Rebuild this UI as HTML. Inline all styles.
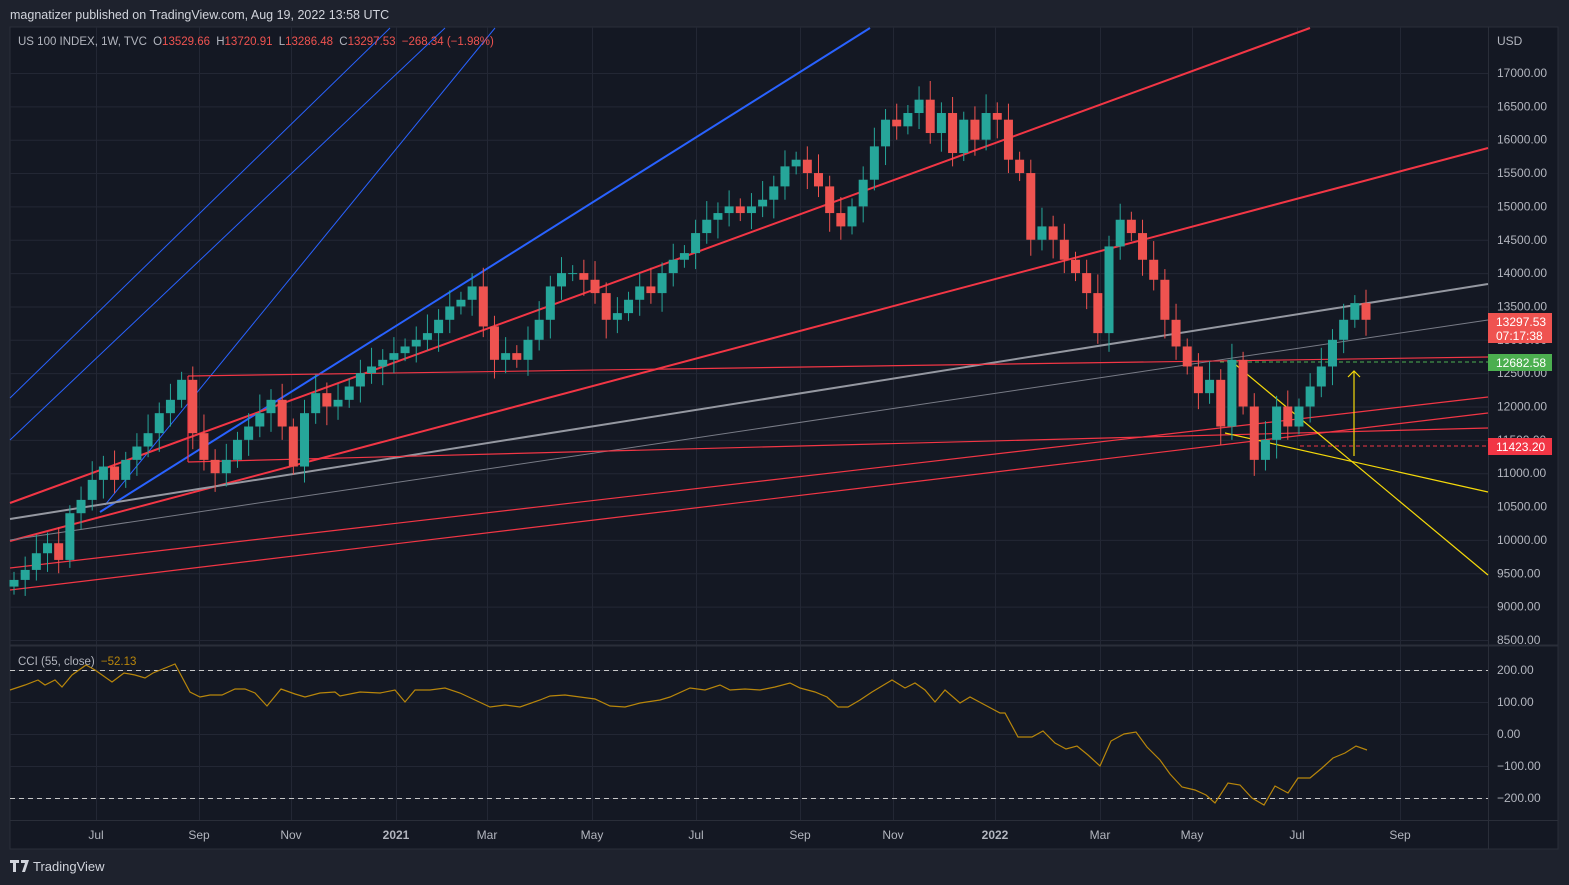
<!DOCTYPE html>
<html><head><meta charset="utf-8"><style>
html,body{margin:0;padding:0;background:#1e222d;width:1569px;height:885px;overflow:hidden;font-family:"Liberation Sans",sans-serif}
svg{position:absolute;left:0;top:0}
</style></head><body>
<svg id="s" width="1569" height="885" xmlns="http://www.w3.org/2000/svg" font-family="Liberation Sans, sans-serif">
<rect x="0" y="0" width="1569" height="885" fill="#1e222d"/>
<text x="10" y="19" fill="#d1d4dc" font-size="12.5">magnatizer published on TradingView.com, Aug 19, 2022 13:58 UTC</text>
<rect x="10" y="27" width="1548" height="822" fill="#141823" stroke="#2a2e39"/>
<g id="grid" stroke="#232734" stroke-width="1"></g>
<line x1="1488.5" y1="27" x2="1488.5" y2="849" stroke="#2a2e39"/>
<line x1="10" y1="645.5" x2="1558" y2="645.5" stroke="#2a2e39" stroke-width="2"/>
<line x1="10" y1="820.5" x2="1558" y2="820.5" stroke="#2a2e39"/>
<g id="draw"></g>
<g id="candles"></g>
<g fill="#b2b5be" font-size="12">
<text x="1497" y="45">USD</text>
</g>
<g id="axis" fill="#b2b5be" font-size="12"></g>
<rect x="1488" y="313" width="64" height="30" fill="#ef5350"/>
<text x="1496" y="326" fill="#fff" font-size="12">13297.53</text>
<text x="1496" y="340" fill="#fff" font-size="12">07:17:38</text>
<rect x="1488" y="354" width="64" height="17" fill="#4caf50"/>
<text x="1496" y="367" fill="#fff" font-size="12">12682.58</text>
<rect x="1488" y="438" width="64" height="17" fill="#f23645"/>
<text x="1496" y="451" fill="#fff" font-size="12">11423.20</text>
<text x="18" y="45" font-size="11.5" fill="#b2b5be">US 100 INDEX, 1W, TVC <tspan dx="3">O</tspan><tspan fill="#ef5350">13529.66</tspan> <tspan dx="3">H</tspan><tspan fill="#ef5350">13720.91</tspan> <tspan dx="3">L</tspan><tspan fill="#ef5350">13286.48</tspan> <tspan dx="3">C</tspan><tspan fill="#ef5350">13297.53</tspan> <tspan dx="3" fill="#ef5350">−268.34 (−1.98%)</tspan></text>
<text x="18" y="665" font-size="11.5" fill="#b2b5be">CCI (55, close) <tspan dx="3" fill="#b8860b">−52.13</tspan></text>
<g fill="#d1d4dc"><path d="M10 860h9v3h-3v9h-3v-9h-3zM21 860h8l-4 12h-3l3-9h-4z"/></g>
<text x="33" y="871" fill="#d1d4dc" font-size="13">TradingView</text>
</svg>
<script>
const ns="http://www.w3.org/2000/svg";
function el(p,t,a){const e=document.createElementNS(ns,t);for(const k in a)e.setAttribute(k,a[k]);p.appendChild(e);return e;}
const g=id=>document.getElementById(id);
const Y=p=>73+(17000-p)*0.0667;
const grid=g('grid');
for(let p=8500;p<=17000;p+=500){el(grid,'line',{x1:10,x2:1488,y1:Y(p)+.5,y2:Y(p)+.5});}
[670,702,734,766,798].forEach(y=>el(grid,'line',{x1:10,x2:1488,y1:y+.5,y2:y+.5}));
const months=[[96,'Jul'],[199,'Sep'],[291,'Nov'],[396,'2021'],[487,'Mar'],[592,'May'],[696,'Jul'],[800,'Sep'],[893,'Nov'],[995,'2022'],[1100,'Mar'],[1192,'May'],[1297,'Jul'],[1400,'Sep']];
const ax=g('axis');
months.forEach(([x,t])=>{el(grid,'line',{x1:x+.5,x2:x+.5,y1:27,y2:820});
 const e=el(ax,'text',{x:x,y:839,'text-anchor':'middle','font-weight':(t.length==4?'bold':'normal')});e.textContent=t;});
for(let p=8500;p<=17000;p+=500){const e=el(ax,'text',{x:1497,y:Y(p)+4});e.textContent=p.toFixed(2);}
[[670,'200.00'],[702,'100.00'],[734,'0.00'],[766,'−100.00'],[798,'−200.00']].forEach(([y,t])=>{const e=el(ax,'text',{x:1497,y:y+4});e.textContent=t;});
const d=g('draw');
const L=(x1,y1,x2,y2,c,w,extra)=>el(d,'line',Object.assign({x1,y1,x2,y2,stroke:c,'stroke-width':w},extra||{}));
L(10,398,390,28,'#2962ff',1);L(10,440,445,28,'#2962ff',1);L(105,505,495,28,'#2962ff',1);
L(100,512,870,28,'#2962ff',2);
L(10,503,1310,28,'#f23645',2);
L(10,541,1488,148,'#f23645',2);
L(10,519,1488,284,'#9598a1',2);
L(10,540,1488,320,'#787b86',1);
L(188,376,1488,357,'#f23645',1.2);L(188,376,188,462,'#f23645',1.2);
L(188,462,1488,428,'#f23645',1.2);
L(10,568,1488,397,'#f23645',1.2);L(10,590,1488,413,'#f23645',1.2);
L(1225,433,1488,492,'#f5d90a',1.2);L(1230,360,1488,575,'#f5d90a',1.2);
L(1220,362,1488,362,'#4caf50',1,{'stroke-dasharray':'4 3'});
L(1300,446,1488,446,'#f23645',1,{'stroke-dasharray':'4 3'});
L(1354,456,1354,371,'#f5d90a',1.2);
el(d,'path',{d:'M1348 377L1354 371L1360 377',stroke:'#f5d90a',fill:'none','stroke-width':1.2});
L(10,670.5,1488,670.5,'#c8c8c8',1,{'stroke-dasharray':'5 4'});
L(10,798.5,1488,798.5,'#c8c8c8',1,{'stroke-dasharray':'5 4'});
const C=[9400,9550,9800,9950,9700,10400,10600,10900,11100,10900,11200,11400,11600,11900,12100,12400,11600,11200,11000,11200,11500,11700,11900,12100,11700,11100,11900,12200,12000,12100,12300,12500,12600,12700,12800,12900,13000,13100,13300,13500,13600,13800,13200,12700,12800,12700,13000,13300,13800,14000,14000,13900,13700,13300,13400,13600,13800,13700,14000,14200,14300,14600,14800,14900,15000,14900,15000,15100,15300,15600,15700,15500,15300,14900,14700,15000,15400,15900,16300,16200,16400,16600,16100,16400,15800,16300,16000,16400,16300,15700,15500,14500,14700,14500,14200,14000,13700,13100,14400,14800,14600,14200,13900,13300,12900,12600,12200,12400,11700,12700,12000,11200,11500,12000,11700,12000,12300,12600,13000,13300,13550,13300];
const n=C.length, x0=14, dx=(1366-14)/(n-1);
const cg=g('candles');
let o=9300;
for(let i=0;i<n;i++){const c=C[i];const up=c>=o;const col=up?'#26a69a':'#ef5350';const x=x0+i*dx;
 const hi=Math.max(o,c)+120+((i*37)%5)*40, lo=Math.min(o,c)-120-((i*53)%5)*40;
 el(cg,'line',{x1:x,x2:x,y1:Y(hi),y2:Y(lo),stroke:col,'stroke-width':1});
 const t=Y(Math.max(o,c)),b=Y(Math.min(o,c));el(cg,'rect',{x:x-4.5,y:t,width:9,height:Math.max(1,b-t),fill:col});
 o=c;}
const cci=[[10,690],[25,685],[38,680],[45,685],[55,680],[62,687],[72,675],[86,665],[95,670],[112,682],[124,673],[135,675],[145,678],[153,673],[175,664],[190,692],[200,697],[210,695],[222,695],[235,689],[245,689],[255,693],[267,706],[281,689],[295,694],[305,697],[320,693],[335,692],[340,696],[360,692],[380,693],[395,690],[405,702],[415,690],[430,690],[445,688],[460,693],[475,700],[490,707],[505,705],[520,707],[540,700],[550,696],[565,695],[580,697],[595,699],[610,706],[625,707],[640,703],[660,700],[670,697],[690,688],[705,690],[720,685],[730,690],[745,689],[760,690],[775,687],[790,683],[800,688],[815,692],[827,697],[838,707],[848,707],[860,700],[872,692],[892,680],[905,688],[915,683],[925,690],[935,702],[945,690],[960,703],[970,697],[985,705],[1000,713],[1005,713],[1018,737],[1032,737],[1043,731],[1055,743],[1066,749],[1077,746],[1088,755],[1100,766],[1111,741],[1124,734],[1136,732],[1147,747],[1160,760],[1170,774],[1182,787],[1195,790],[1206,795],[1215,803],[1228,783],[1240,785],[1252,798],[1264,805],[1275,786],[1288,793],[1298,778],[1310,778],[1322,768],[1333,758],[1345,753],[1356,746],[1367,750]];
el(d,'polyline',{points:cci.map(p=>p.join(',')).join(' '),fill:'none',stroke:'#b8860b','stroke-width':1.2});
</script>
</body></html>
